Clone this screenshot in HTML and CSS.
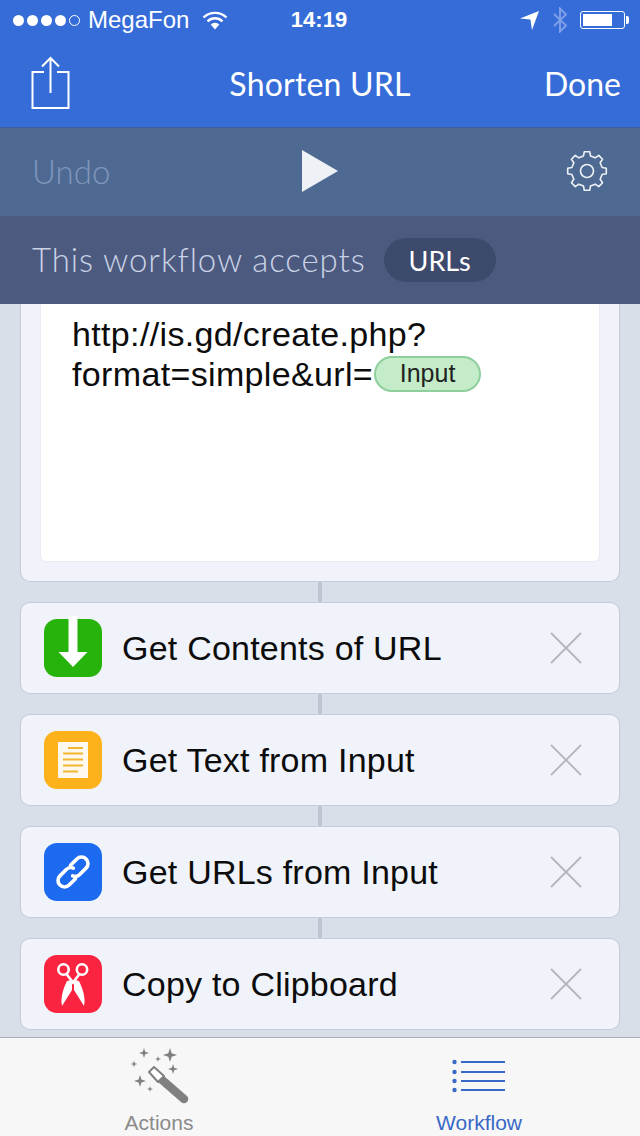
FILE: index.html
```html
<!DOCTYPE html>
<html lang="en">
<head>
  <meta charset="UTF-8">
  <meta name="viewport" content="width=device-width, initial-scale=1">
  <title>Shorten URL</title>
  <link rel="stylesheet" href="styles.css">
</head>
<body>
  <div class="app">
    <!-- Header -->
    <header class="header">
      <div class="status-bar">
        <div class="status-left">
          <span class="dots"><i></i><i></i><i></i><i></i><i class="empty"></i></span>
          <span class="carrier">MegaFon</span>
          <svg class="wifi" width="26" height="20" viewBox="0 0 26 20">
            <path d="M1.5 7.5a16.5 16.5 0 0 1 23 0" fill="none" stroke="#fff" stroke-width="2.4"/>
            <path d="M5.5 11.3a10.8 10.8 0 0 1 15 0" fill="none" stroke="#fff" stroke-width="2.4"/>
            <path d="M13 19.5l-4.3-5a6 6 0 0 1 8.6 0z" fill="#fff"/>
          </svg>
        </div>
        <div class="clock">14:19</div>
        <div class="status-right">
          <svg width="20" height="20" viewBox="0 0 20 20"><path d="M0 8.500L19 1l-7 19-1.600-10.400z" fill="#fff"/></svg>
          <svg width="16" height="26" viewBox="0 0 16 26"><path d="M2 7l12 11.500-6 6V1.500l6 6L2 19" fill="none" stroke="#7d9ee8" stroke-width="2"/></svg>
          <div class="battery"><div class="battery-level"></div></div>
        </div>
      </div>
      <nav class="nav">
        <svg class="share" width="40" height="54" viewBox="0 0 40 54">
          <path d="M13 16H1.500v36h36V16H26" fill="none" stroke="#fff" stroke-width="2"/>
          <path d="M19.500 37V2M11 10.500l8.500-8.500 8.500 8.500" fill="none" stroke="#fff" stroke-width="2"/>
        </svg>
        <h1 class="nav-title">Shorten URL</h1>
        <span class="nav-done">Done</span>
      </nav>
    </header>

    <!-- Toolbar -->
    <div class="toolbar">
      <span class="undo">Undo</span>
      <svg class="play" width="36" height="42" viewBox="0 0 36 42"><path d="M0 0l36 21L0 42z" fill="#eef1f6"/></svg>
      <svg class="gear" width="42" height="42" viewBox="-21 -21 42 42">
        <polygon fill="none" stroke="#eef1f6" stroke-width="1.600" stroke-linejoin="round" points="-3.500,-15.100 -2.700,-19.300 2.700,-19.300 3.500,-15.100 8.200,-13.150 11.740,-15.560 15.560,-11.740 13.150,-8.200 15.100,-3.500 19.300,-2.700 19.300,2.700 15.100,3.500 13.150,8.200 15.560,11.740 11.740,15.560 8.200,13.150 3.500,15.100 2.700,19.300 -2.700,19.300 -3.500,15.100 -8.200,13.150 -11.740,15.560 -15.560,11.740 -13.150,8.200 -15.100,3.500 -19.300,2.700 -19.300,-2.700 -15.100,-3.500 -13.150,-8.200 -15.560,-11.740 -11.740,-15.560 -8.200,-13.150"/>
        <circle r="6.500" fill="none" stroke="#eef1f6" stroke-width="1.600"/>
      </svg>
    </div>

    <!-- Accepts -->
    <div class="accepts">
      <span class="accepts-text">This workflow accepts</span>
      <span class="accepts-pill">URLs</span>
    </div>

    <!-- Workflow -->
    <main class="workflow">
      <div class="card card-url">
        <div class="url-box">
          http://is.gd/create.php?<br>format=simple&amp;url=<span class="token">Input</span>
        </div>
      </div>
      <div class="link"></div>
      <div class="card row">
        <span class="icon green">
          <svg width="58" height="58" viewBox="0 0 58 58"><path d="M24.500-3h9v36h10L29 48 14.500 33h10z" fill="#fff"/></svg>
        </span>
        <span class="row-label">Get Contents of URL</span>
        <svg class="remove" width="32" height="32" viewBox="0 0 32 32"><path d="M1 1l30 30M31 1L1 31" stroke="#b3b6bc" stroke-width="1.800"/></svg>
      </div>
      <div class="link"></div>
      <div class="card row">
        <span class="icon yellow">
          <svg width="58" height="58" viewBox="0 0 58 58">
            <rect x="14" y="11" width="30" height="36" fill="#fef9ec"/>
            <path d="M24 17h15M19 22.500h20M19 28.500h20M19 34.500h20M19 40.500h15" stroke="#f2b530" stroke-width="2"/>
          </svg>
        </span>
        <span class="row-label">Get Text from Input</span>
        <svg class="remove" width="32" height="32" viewBox="0 0 32 32"><path d="M1 1l30 30M31 1L1 31" stroke="#b3b6bc" stroke-width="1.800"/></svg>
      </div>
      <div class="link"></div>
      <div class="card row">
        <span class="icon blue">
          <svg width="58" height="58" viewBox="0 0 58 58">
            <g fill="none" stroke="#fff" stroke-width="3.600" stroke-linecap="round" transform="rotate(-45 29 29)">
              <path d="M26 35.500H17a6.500 6.500 0 0 1 0-13h9a6.500 6.500 0 0 1 6 4"/>
              <path d="M32 22.500H41a6.500 6.500 0 0 1 0 13H32a6.500 6.500 0 0 1-6-4"/>
            </g>
          </svg>
        </span>
        <span class="row-label">Get URLs from Input</span>
        <svg class="remove" width="32" height="32" viewBox="0 0 32 32"><path d="M1 1l30 30M31 1L1 31" stroke="#b3b6bc" stroke-width="1.800"/></svg>
      </div>
      <div class="link"></div>
      <div class="card row">
        <span class="icon red">
          <svg width="58" height="58" viewBox="0 0 58 58">
            <circle cx="19.500" cy="14.500" r="5.200" fill="none" stroke="#fff" stroke-width="2.600"/>
            <circle cx="38" cy="14.500" r="5.200" fill="none" stroke="#fff" stroke-width="2.600"/>
            <path d="M22.500 19l6.500 8.500 6.500-8.500" fill="none" stroke="#fff" stroke-width="2.600"/>
            <path d="M28 25v10L18 51c-2-9 2-19 5-25z" fill="#fff"/>
            <path d="M30 25v10l10 16c2-9-2-19-5-25z" fill="#fff"/>
          </svg>
        </span>
        <span class="row-label">Copy to Clipboard</span>
        <svg class="remove" width="32" height="32" viewBox="0 0 32 32"><path d="M1 1l30 30M31 1L1 31" stroke="#b3b6bc" stroke-width="1.800"/></svg>
      </div>
    </main>

    <!-- Tab bar -->
    <footer class="tabbar">
      <div class="tab">
        <svg width="60" height="58" viewBox="0 0 60 58">
          <defs>
            <path id="spark" d="M0-1L.24-.24 1 0 .24.24 0 1-.24.24-1 0-.24-.24z" fill="#808080"/>
          </defs>
          <use href="#spark" transform="translate(15 6) scale(5)"/>
          <use href="#spark" transform="translate(41 8) scale(7)"/>
          <use href="#spark" transform="translate(29 12) scale(3)"/>
          <use href="#spark" transform="translate(5 17) scale(3.500)"/>
          <use href="#spark" transform="translate(44 22) scale(5)"/>
          <use href="#spark" transform="translate(11 34) scale(6)"/>
          <use href="#spark" transform="translate(21 42) scale(3)"/>
          <path d="M20 25l5-5 10 9-6 6z" fill="#fff" stroke="#808080" stroke-width="2" stroke-linejoin="round"/>
          <path d="M29 35l6-6 23 20a4 4 0 0 1-6 6z" fill="#808080"/>
        </svg>
        <span class="tab-label">Actions</span>
      </div>
      <div class="tab tab-active">
        <svg width="56" height="58" viewBox="0 0 56 58">
          <g fill="#3a68c6">
            <circle cx="3.500" cy="15" r="2.200"/><circle cx="3.500" cy="25" r="2.200"/><circle cx="3.500" cy="34" r="2.200"/><circle cx="3.500" cy="43" r="2.200"/>
            <rect x="10" y="14" width="44" height="2"/><rect x="10" y="24" width="44" height="2"/><rect x="10" y="33" width="44" height="2"/><rect x="10" y="42" width="44" height="2"/>
          </g>
        </svg>
        <span class="tab-label">Workflow</span>
      </div>
    </footer>
  </div>
</body>
</html>
```

FILE: styles.css
```css
body {
  font-family: "Liberation Sans", Arial, sans-serif;
  margin: 0;
  padding: 0;
  background-color: #d9dfe9;
}
.app {
  display: flex;
  flex-direction: column;
  width: 640px;
  height: 1136px;
  overflow: hidden;
}
/* Header */
.header {
  flex: none;
  height: 127px;
  background-color: #366cd8;
  color: #fff;
  border-bottom: 1px solid #3c5f9e;
}
.status-bar {
  display: grid;
  grid-template-columns: 1fr auto 1fr;
  align-items: center;
  height: 40px;
  padding: 0 15px 0 13px;
}
.status-left {
  display: flex;
  align-items: center;
}
.dots {
  display: flex;
  gap: 3px;
}
.dots i {
  width: 11px;
  height: 11px;
  border-radius: 50%;
  background-color: #fff;
  box-sizing: border-box;
}
.dots i.empty {
  background: none;
  border: 1px solid #fff;
}
.carrier {
  font-size: 24px;
  margin-left: 8px;
}
.wifi {
  margin-left: 13px;
}
.clock {
  font-size: 22px;
  font-weight: bold;
}
.status-right {
  display: flex;
  align-items: center;
  justify-content: flex-end;
  gap: 12px;
}
.battery {
  position: relative;
  width: 45px;
  height: 18px;
  box-sizing: border-box;
  border: 1px solid #fff;
  border-radius: 3px;
  padding: 2px;
}
.battery::after {
  content: "";
  position: absolute;
  right: -5px;
  top: 4px;
  width: 3px;
  height: 8px;
  background-color: #fff;
  border-radius: 0 2px 2px 0;
}
.battery-level {
  width: 29px;
  height: 100%;
  background-color: #fff;
}
.nav {
  display: grid;
  grid-template-columns: 1fr auto 1fr;
  align-items: center;
  height: 87px;
  padding: 0 19px;
}
.share {
  margin: -2px 0 0 12px;
}
.nav-title {
  font-family: Lato, sans-serif;
  font-size: 32px;
  font-weight: 400;
  letter-spacing: 0.2px;
  margin: 0;
}
.nav-done {
  font-family: Lato, sans-serif;
  font-size: 32px;
  justify-self: end;
}
/* Toolbar */
.toolbar {
  flex: none;
  box-sizing: border-box;
  display: grid;
  grid-template-columns: 1fr auto 1fr;
  align-items: center;
  height: 88px;
  padding: 0 32px 2px;
  background-color: #4e6a93;
}
.undo {
  font-family: Lato, sans-serif;
  font-size: 33px;
  font-weight: 300;
  color: #7f96ba;
}
.gear {
  justify-self: end;
}
/* Accepts bar */
.accepts {
  flex: none;
  box-sizing: border-box;
  display: flex;
  align-items: center;
  gap: 18px;
  height: 88px;
  padding: 0 32px;
  background-color: #4d5a80;
}
.accepts-text {
  font-family: Lato, sans-serif;
  font-size: 33px;
  font-weight: 300;
  letter-spacing: 0.9px;
  color: #c9d3e5;
  margin-top: -3px;
}
.accepts-pill {
  display: flex;
  align-items: center;
  height: 44px;
  padding: 0 25px;
  border-radius: 22px;
  background-color: #3e4a6b;
  color: #fff;
  font-family: Lato, sans-serif;
  font-size: 27px;
}
/* Workflow list */
.workflow {
  flex: 1;
  min-height: 0;
  padding: 0 20px;
  border-bottom: 1px solid #a9adb5;
}
.card {
  box-sizing: border-box;
  background-color: #f0f3f9;
  border: 1px solid #c6ccd7;
  border-radius: 10px;
}
.card-url {
  height: 278px;
  padding: 0 19px 19px;
  border-top: none;
  border-radius: 0 0 10px 10px;
}
.url-box {
  box-sizing: border-box;
  height: 100%;
  padding: 10px 31px;
  background-color: #fff;
  border: 1px solid #e8ebf1;
  border-top: none;
  border-radius: 0 0 6px 6px;
  color: #0c0c0c;
  font-size: 34px;
  letter-spacing: 0.35px;
  line-height: 40px;
}
.token {
  display: inline-block;
  vertical-align: 4px;
  box-sizing: border-box;
  width: 107px;
  height: 36px;
  margin-left: 1px;
  border: 2px solid #8fcf9e;
  border-radius: 18px;
  background-color: #c4ecc8;
  font-size: 25px;
  letter-spacing: 0;
  line-height: 31px;
  text-align: center;
  color: #222;
}
.link {
  width: 4px;
  height: 20px;
  margin: 0 auto;
  background-color: #bfc6d2;
}
.row {
  display: flex;
  align-items: center;
  height: 92px;
  padding: 0 37px 0 23px;
}
.icon {
  flex: none;
  width: 58px;
  height: 58px;
  border-radius: 13px;
}
.icon svg {
  display: block;
  overflow: visible;
}
.green { background-color: #25b30c; }
.yellow { background-color: #fdb21c; }
.blue { background-color: #1b6af0; }
.red { background-color: #fb2440; }
.row-label {
  flex: 1;
  margin-left: 20px;
  font-size: 34px;
  letter-spacing: 0.22px;
  color: #0c0c0c;
}
/* Tab bar */
.tabbar {
  flex: none;
  display: flex;
  height: 98px;
  background-color: #f7f7f7;
}
.tab {
  flex: 1;
  display: flex;
  flex-direction: column;
  align-items: center;
  padding: 9px 2px 0 0;
  color: #8a8a8a;
}
.tab-active {
  color: #3a68c6;
}
.tab-label {
  margin-top: 6px;
  font-size: 21px;
}
```
